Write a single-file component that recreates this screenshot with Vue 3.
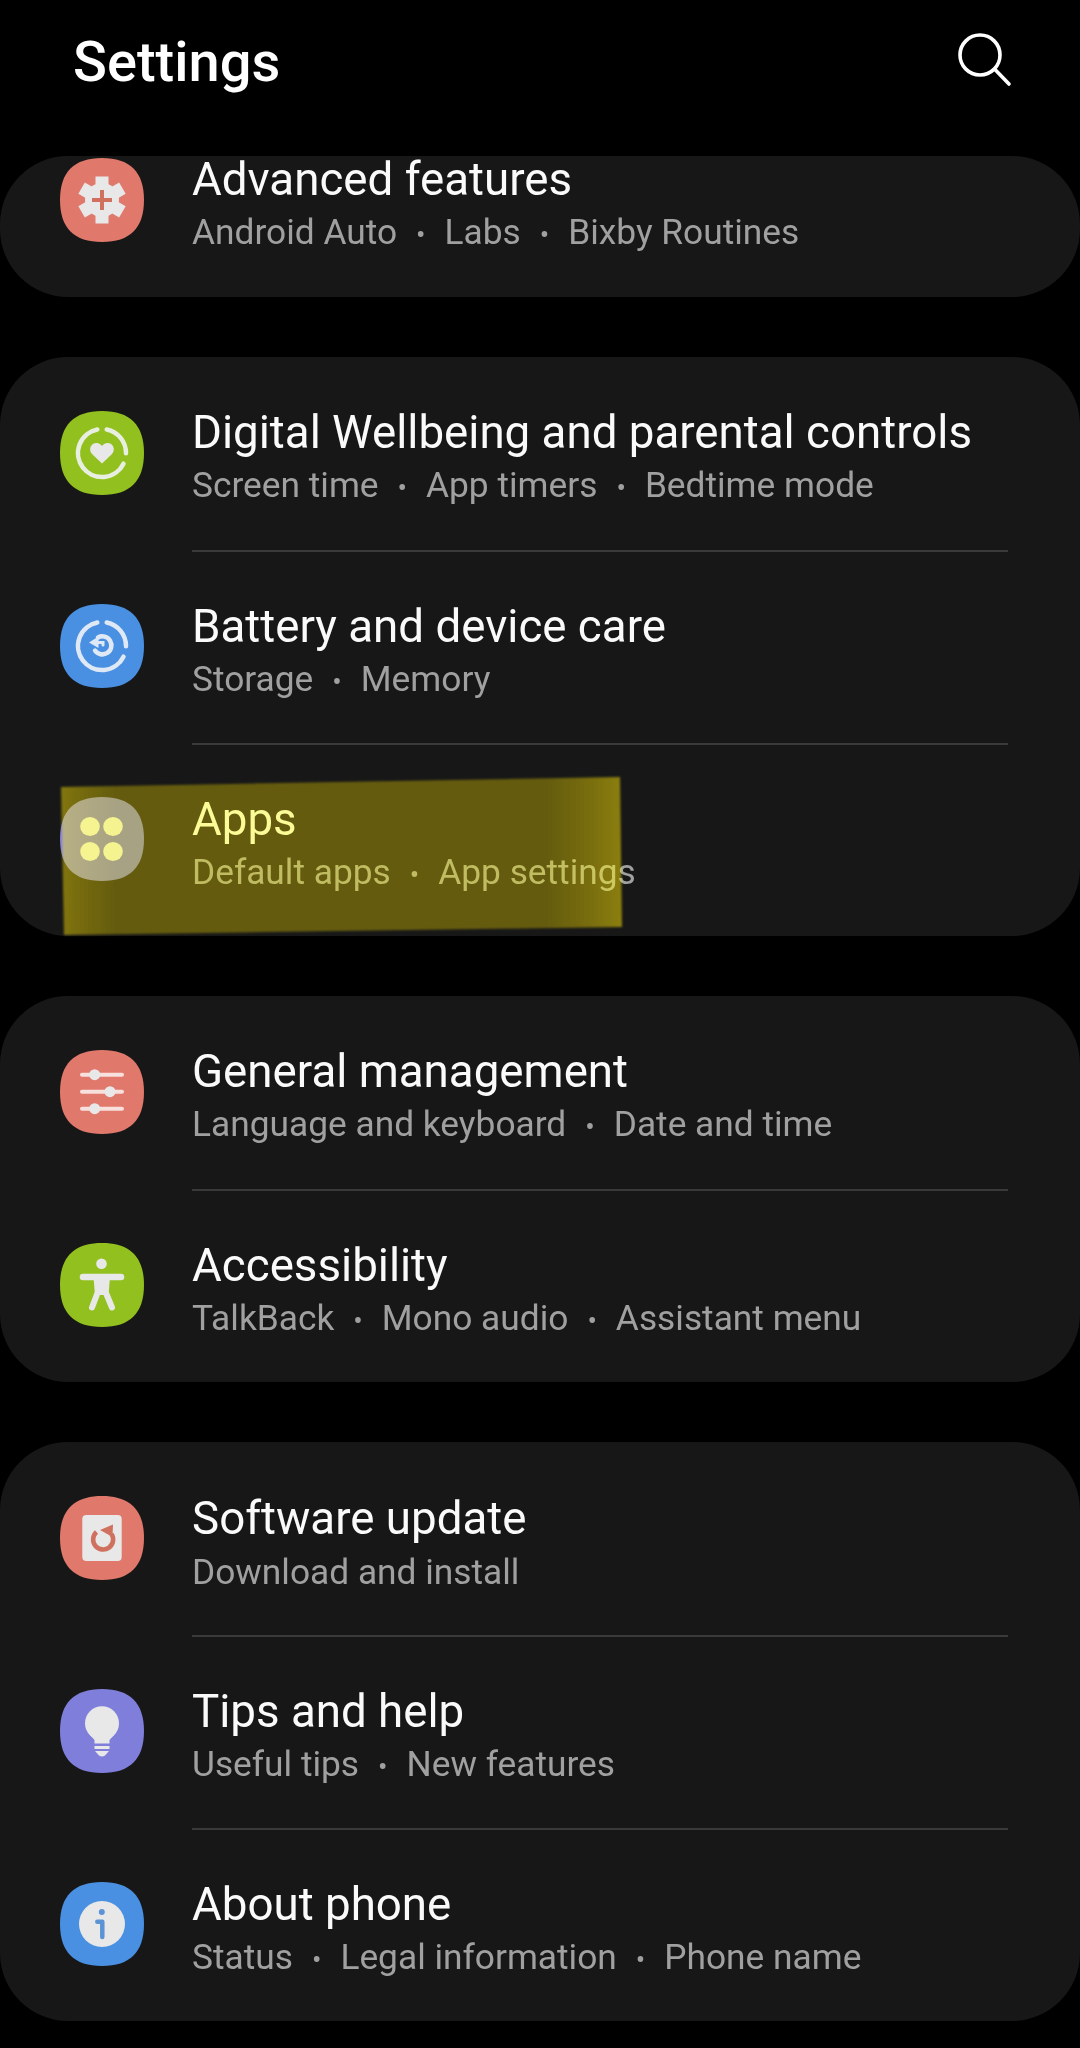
<template>
  <div class="screen">
    <header class="top-bar">
      <h1>Settings</h1>
      <svg class="search" viewBox="0 0 60 60" fill="none" stroke="#fff" stroke-width="3.6" stroke-linecap="round">
        <circle cx="26" cy="25" r="20" />
        <path d="M41 39.500 L55 54" />
      </svg>
    </header>

    <section v-for="(card, i) in cards" :key="i" class="card" :class="{ clipped: i === 0 }">
      <div v-for="row in card" :key="row.title" class="row">
        <svg class="icon" viewBox="0 0 84 84" fill="none">
          <path :fill="row.color" d="M42 0C70 0 84 14 84 42C84 70 70 84 42 84C14 84 0 70 0 42C0 14 14 0 42 0Z" />

          <g v-if="row.icon === 'gear'">
            <circle cx="42" cy="42" r="17" fill="#e8e8e8" />
            <g stroke="#e8e8e8" stroke-width="13">
              <path d="M42 18.500V65.500" />
              <path d="M21.600 30.200L62.400 53.800" />
              <path d="M21.600 53.800L62.400 30.200" />
            </g>
            <path d="M32 42H52M42 32V52" stroke="#d0705f" stroke-width="4" />
          </g>

          <g v-else-if="row.icon === 'wellbeing'">
            <g stroke="#e8eee0" stroke-width="4.500" stroke-linecap="round">
              <path d="M46.700 18.500A24 24 0 0 1 66 42.300" />
              <path d="M63.500 52.700A24 24 0 1 1 37.300 18.500" />
            </g>
            <path fill="#e8e8e8" d="M42 52.500L32 43C28 38.500 31 32 36.500 32C39 32 41 33.500 42 35C43 33.500 45 32 47.500 32C53 32 56 38.500 52 43Z" />
          </g>

          <g v-else-if="row.icon === 'battery'">
            <g stroke="#dfe9f6" stroke-width="4.500" stroke-linecap="round">
              <path d="M46.700 18.500A24 24 0 0 1 66 42.300" />
              <path d="M63.500 52.700A24 24 0 1 1 37.300 18.500" />
              <path d="M38 33.500A9 9 0 1 1 35 46.500" />
              <path d="M37 38.500H43V41" stroke-width="3" />
            </g>
            <path fill="#dfe9f6" d="M29 38.500L38.500 32.500V44Z" />
          </g>

          <g v-else-if="row.icon === 'apps'" fill="#efefef">
            <ellipse cx="30" cy="29.500" rx="9.800" ry="9.500" />
            <ellipse cx="53" cy="29.500" rx="9.800" ry="9.500" />
            <ellipse cx="30" cy="54.500" rx="9.800" ry="9.500" />
            <ellipse cx="53" cy="54.500" rx="9.800" ry="9.500" />
          </g>

          <g v-else-if="row.icon === 'sliders'">
            <path d="M22 24.700H62M22 41.700H62M22 58.700H62" stroke="#f8e0dc" stroke-width="4" stroke-linecap="round" />
            <g fill="#e8e8e8">
              <circle cx="34.700" cy="24.700" r="5.500" />
              <circle cx="50" cy="41.700" r="5.500" />
              <circle cx="34.700" cy="58.700" r="5.500" />
            </g>
          </g>

          <g v-else-if="row.icon === 'person'">
            <circle cx="41.500" cy="20.700" r="5.300" fill="#e8e8e8" />
            <path fill="#e8e8e8" d="M33.500 34H50L48.500 52H35Z" />
            <g stroke="#e8e8e8" stroke-linecap="round">
              <path d="M23 34H61" stroke-width="6.500" />
              <path d="M37.500 50L32 64.500M46 50L52 64.500" stroke-width="6" />
            </g>
          </g>

          <g v-else-if="row.icon === 'update'">
            <rect x="22.300" y="19" width="39.400" height="46" rx="4" fill="#e8e8e8" />
            <path d="M36.500 36A10 10 0 1 0 51.500 38" stroke="#d0705f" stroke-width="4.600" />
            <path fill="#d0705f" d="M40 34L53 28.500L52.500 41Z" />
          </g>

          <g v-else-if="row.icon === 'bulb'" fill="#e8e8e8">
            <circle cx="42" cy="34.300" r="17" />
            <path d="M30 46L34.500 51V54.500H49.500V51L54 46Z" />
            <rect x="34.500" y="57" width="15" height="3" />
            <path d="M35 62H49L45 66.500Q42 68.500 39 66.500Z" />
          </g>

          <g v-else-if="row.icon === 'info'">
            <circle cx="42" cy="42" r="23" fill="#e8e8e8" />
            <circle cx="41.800" cy="30" r="3" fill="#5c93d6" />
            <path d="M37.300 39.700H42.300V55" stroke="#5c93d6" stroke-width="4.500" stroke-linecap="round" stroke-linejoin="round" />
          </g>
        </svg>

        <div class="row-text">
          <div class="title">{{ row.title }}</div>
          <div class="sub">
            <template v-for="(part, n) in row.parts" :key="part">
              <span v-if="n > 0" class="dot">•</span>{{ part }}
            </template>
          </div>
        </div>
      </div>
    </section>

    <div class="marker"><div class="marker-ink"></div></div>
  </div>
</template>

<script setup>
const cards = [
  [
    { title: 'Advanced features', parts: ['Android Auto', 'Labs', 'Bixby Routines'], icon: 'gear', color: '#e0796c' },
  ],
  [
    { title: 'Digital Wellbeing and parental controls', parts: ['Screen time', 'App timers', 'Bedtime mode'], icon: 'wellbeing', color: '#92c11f' },
    { title: 'Battery and device care', parts: ['Storage', 'Memory'], icon: 'battery', color: '#4a90e2' },
    { title: 'Apps', parts: ['Default apps', 'App settings'], icon: 'apps', color: '#7d7bdb' },
  ],
  [
    { title: 'General management', parts: ['Language and keyboard', 'Date and time'], icon: 'sliders', color: '#e0796c' },
    { title: 'Accessibility', parts: ['TalkBack', 'Mono audio', 'Assistant menu'], icon: 'person', color: '#92c11f' },
  ],
  [
    { title: 'Software update', parts: ['Download and install'], icon: 'update', color: '#e0796c' },
    { title: 'Tips and help', parts: ['Useful tips', 'New features'], icon: 'bulb', color: '#7f7fdb' },
    { title: 'About phone', parts: ['Status', 'Legal information', 'Phone name'], icon: 'info', color: '#4a90e2' },
  ],
]
</script>

<style>
body {
  background: #000;
}
</style>

<style scoped>
.screen {
  position: relative;
  width: 1080px;
  height: 2048px;
  overflow: hidden;
  background: #000;
  font-family: Roboto, "Liberation Sans", sans-serif;
}

.top-bar {
  height: 156px;
  display: flex;
  align-items: flex-start;
  justify-content: space-between;
  padding: 30px 66px 0 73px;
  box-sizing: border-box;
}

.top-bar h1 {
  margin: 0;
  font-size: 56px;
  line-height: 64px;
  font-weight: 500;
  color: #fff;
}

.search {
  width: 60px;
  height: 60px;
}

.card {
  background: #171717;
  border-radius: 68px;
  margin-bottom: 60px;
  overflow: hidden;
}

.card.clipped {
  height: 141px;
  display: flex;
  flex-direction: column;
  justify-content: flex-end;
}

.row {
  flex: none;
  height: 193px;
  display: flex;
  align-items: center;
  padding: 0 72px 0 60px;
  gap: 48px;
}

.icon {
  flex: none;
  width: 84px;
  height: 84px;
  margin-top: -2px;
}

.row-text {
  flex: 1;
  height: 100%;
  box-sizing: border-box;
  display: flex;
  flex-direction: column;
  justify-content: center;
  padding-top: 14px;
}

.row + .row .row-text {
  border-top: 2px solid #3a3a3a;
}

.title {
  font-size: 45.700px;
  line-height: 54px;
  color: #fafafa;
}

.sub {
  font-size: 35.300px;
  line-height: 54px;
  margin-top: -1.500px;
  color: #a0a0a0;
}

.dot {
  margin: 0 19px;
  font-size: 28px;
}

.marker {
  position: absolute;
  left: 56px;
  top: 772px;
  width: 572px;
  height: 170px;
  filter: blur(1px);
  mix-blend-mode: hard-light;
}

.marker-ink {
  width: 100%;
  height: 100%;
  clip-path: polygon(5px 15px, 564px 5px, 566px 155px, 8px 163px);
  background: linear-gradient(90deg, #bdb64d 0, #b4ae4d 22px, #aaa54d 60px, #aaa54d 490px, #b4ae4d 530px, #bfb84d 564px);
}
</style>
